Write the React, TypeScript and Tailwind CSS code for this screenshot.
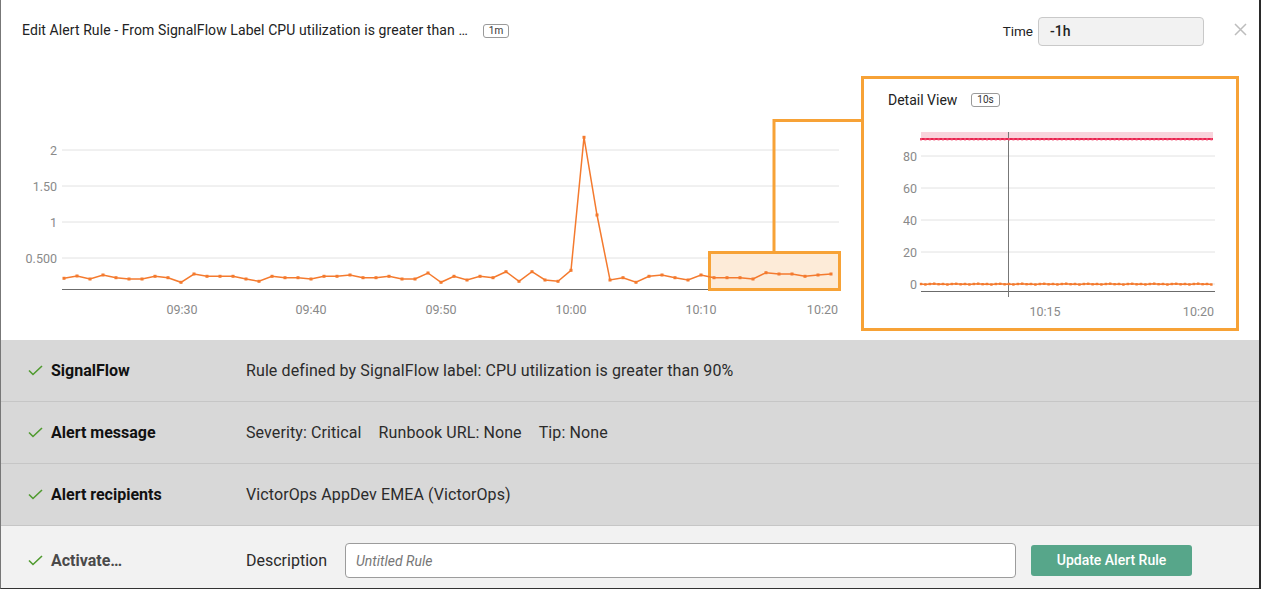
import React from "react";

const mainY = [
  279.3, 277, 280, 276, 278.7, 280, 280, 277.3, 278.7, 283.3, 275, 277.3, 277.3, 277.3, 280, 282.3, 277.3, 278.7, 278.7, 280,
  277.3, 277.3, 276, 278.7, 278.7, 277.3, 280, 280, 274, 283.3, 277.3, 281, 277.3, 278.7, 272.7, 282.3, 272.7, 281, 282.3, 271.3,
  138.3, 216, 281, 278.7, 283.3, 277.3, 276, 278.7, 281, 276, 278.7, 278.7, 278.7, 280, 273.7, 275, 275, 277.3, 276, 275,
];

// main chart is drawn in page coords shifted up by 77
const mainPts = mainY.map((y, i) => [63 + 13 * i, y - 77] as const);

const detailXs = Array.from({ length: 67 }, (_, i) => 57 + i * 4.4);
const orangeJitter = [0, 0.4, 0, -0.3, 0.2, 0, 0.5, 0, -0.2, 0.3];

function Check() {
  return (
    <svg width="15" height="11" viewBox="0 0 15 11" className="shrink-0">
      <polyline points="1,5.5 5,9.5 14,1" fill="none" stroke="#4f9a2e" strokeWidth="1.6" />
    </svg>
  );
}

function Badge({ children }: { children: React.ReactNode }) {
  return (
    <span className="inline-flex h-[14px] items-center rounded-[3px] border border-[#9a9a9a] px-[5px] text-[10px] leading-none text-[#333]">
      {children}
    </span>
  );
}

function MainChart() {
  const grid = [
    { y: 74, label: "2" },
    { y: 110, label: "1.50" },
    { y: 146, label: "1" },
    { y: 182, label: "0.500" },
  ];
  const ticks = [
    { x: 181, label: "09:30" },
    { x: 310, label: "09:40" },
    { x: 440, label: "09:50" },
    { x: 570, label: "10:00" },
    { x: 700, label: "10:10" },
  ];
  return (
    <svg width="860" height="255" className="shrink-0" style={{ fontFamily: "Roboto, sans-serif" }}>
      {grid.map((g) => (
        <g key={g.label}>
          <line x1="61" x2="838" y1={g.y} y2={g.y} stroke="#e2e2e2" strokeWidth="1" />
          <text x="56" y={g.y + 5} textAnchor="end" fontSize="12.5" fill="#8a8a8a">
            {g.label}
          </text>
        </g>
      ))}
      <line x1="61" x2="838" y1="213.5" y2="213.5" stroke="#6b6b6b" strokeWidth="1" />
      {ticks.map((t) => (
        <text key={t.label} x={t.x} y="238" textAnchor="middle" fontSize="12.5" fill="#8a8a8a">
          {t.label}
        </text>
      ))}
      <text x="837" y="238" textAnchor="end" fontSize="12.5" fill="#8a8a8a">
        10:20
      </text>

      {/* zoom box + connector */}
      <rect x="708.5" y="176.5" width="130" height="37" fill="#fdebd8" stroke="#f7a236" strokeWidth="3" />
      <polyline points="773,175 773,44.5 861,44.5" fill="none" stroke="#f7a236" strokeWidth="3" />

      <polyline
        points={mainPts.map(([x, y]) => `${x},${y}`).join(" ")}
        fill="none"
        stroke="#f47a2e"
        strokeWidth="1.5"
      />
      {mainPts.map(([x, y], i) => (
        <rect key={i} x={x - 1.5} y={y - 1.5} width="3" height="3" fill="#f47a2e" />
      ))}
    </svg>
  );
}

function DetailChart() {
  const grid = [
    { y: 35, label: "80" },
    { y: 67, label: "60" },
    { y: 99, label: "40" },
    { y: 131, label: "20" },
    { y: 163, label: "0" },
  ];
  return (
    <svg width="372" height="207" style={{ fontFamily: "Roboto, sans-serif" }}>
      <rect x="57" y="11" width="292" height="7" fill="#f9d3dc" />
      {grid.map((g) => (
        <g key={g.label}>
          <line x1="57" x2="351" y1={g.y} y2={g.y} stroke="#e2e2e2" strokeWidth="1" />
          <text x="53" y={g.y + 5} textAnchor="end" fontSize="12.5" fill="#8a8a8a">
            {g.label}
          </text>
        </g>
      ))}
      <line x1="57" x2="351" y1="170.5" y2="170.5" stroke="#6b6b6b" strokeWidth="1" />
      <line x1="144.5" x2="144.5" y1="11" y2="176" stroke="#777" strokeWidth="1" />
      <text x="181" y="195" textAnchor="middle" fontSize="12.5" fill="#8a8a8a">
        10:15
      </text>
      <text x="350" y="195" textAnchor="end" fontSize="12.5" fill="#8a8a8a">
        10:20
      </text>

      <line x1="57" x2="349" y1="18" y2="18" stroke="#e8234f" strokeWidth="2" />
      {detailXs.map((x, i) => (
        <rect key={"r" + i} x={x - 1} y={17} width="2" height="2.4" fill="#f0476c" />
      ))}
      <polyline
        points={detailXs.map((x, i) => `${x},${163 + orangeJitter[i % 10]}`).join(" ")}
        fill="none"
        stroke="#f47a2e"
        strokeWidth="1.5"
      />
      {detailXs.map((x, i) => (
        <rect key={"o" + i} x={x - 1.2} y={161.8 + orangeJitter[i % 10]} width="2.4" height="2.4" fill="#f47a2e" />
      ))}
    </svg>
  );
}

function SummaryRow({ label, children }: { label: string; children: React.ReactNode }) {
  return (
    <div className="flex h-[62px] items-center border-b border-[#c6c6c6]">
      <div className="flex w-[245px] items-center gap-[8px] pl-[27px]">
        <Check />
        <span className="text-[16px] font-bold text-[#111]">{label}</span>
      </div>
      <div className="flex gap-[17px] text-[16px] tracking-[0.1px] text-[#2b2b2b]">{children}</div>
    </div>
  );
}

export default function App() {
  return (
    <div
      className="flex h-[589px] w-[1261px] flex-col overflow-hidden border-b border-l border-r-2 border-b-[#333] border-l-[#777] border-r-[#2a2a2a] bg-white"
      style={{ fontFamily: "Roboto, 'Noto Sans', sans-serif" }}
    >
      {/* white top area */}
      <div className="flex h-[340px] shrink-0 flex-col">
        <div className="flex h-[76px] items-start pt-[17px]">
          <div className="flex h-[27px] items-center gap-[15px] pl-[21px]">
            <span className="text-[14px] tracking-[0.08px] text-[#222]">
              Edit Alert Rule - From SignalFlow Label CPU utilization is greater than …
            </span>
            <Badge>1m</Badge>
          </div>
          <div className="ml-auto flex h-[29px] items-center">
            <span className="mr-[5px] text-[13.5px] text-[#222]">Time</span>
            <div className="flex h-[29px] w-[166px] items-center rounded-[4px] border border-[#c9c9c9] bg-[#f2f2f2] pl-[11px] text-[14px] font-medium text-[#222]">
              -1h
            </div>
            <svg width="13" height="13" viewBox="0 0 13 13" className="ml-[30px] mr-[12px] -mt-[4px]">
              <path d="M1 1 L12 12 M12 1 L1 12" stroke="#bdbdbd" strokeWidth="1.5" />
            </svg>
          </div>
        </div>
        <div className="flex">
          <MainChart />
          <div className="flex h-[255px] w-[378px] flex-col border-[3px] border-[#f7a236]">
            <div className="flex h-[42px] items-center gap-[14px] pl-[24px]">
              <span className="text-[14px] text-[#222]">Detail View</span>
              <Badge>10s</Badge>
            </div>
            <DetailChart />
          </div>
        </div>
      </div>

      {/* summary */}
      <div className="bg-[#d8d8d8]">
        <SummaryRow label="SignalFlow">
          <span>Rule defined by SignalFlow label: CPU utilization is greater than 90%</span>
        </SummaryRow>
        <SummaryRow label="Alert message">
          <span>Severity: Critical</span>
          <span>Runbook URL: None</span>
          <span>Tip: None</span>
        </SummaryRow>
        <SummaryRow label="Alert recipients">
          <span>VictorOps AppDev EMEA (VictorOps)</span>
        </SummaryRow>
      </div>

      {/* activate row */}
      <div className="flex flex-1 items-center bg-[#f2f2f2] pt-[7px]">
        <div className="flex w-[245px] items-center gap-[8px] pl-[27px]">
          <Check />
          <span className="text-[16px] font-bold text-[#4a4a4a]">Activate…</span>
        </div>
        <span className="w-[99px] text-[16px] text-[#2b2b2b]">Description</span>
        <input
          className="h-[35px] w-[671px] rounded-[4px] border border-[#9c9c9c] bg-white pl-[10px] text-[14px] italic text-[#333] outline-none placeholder:text-[#777]"
          placeholder="Untitled Rule"
        />
        <button className="ml-[15px] h-[31px] w-[161px] rounded-[3px] bg-[#57a68a] text-[14px] font-medium text-white">
          Update Alert Rule
        </button>
      </div>
    </div>
  );
}
